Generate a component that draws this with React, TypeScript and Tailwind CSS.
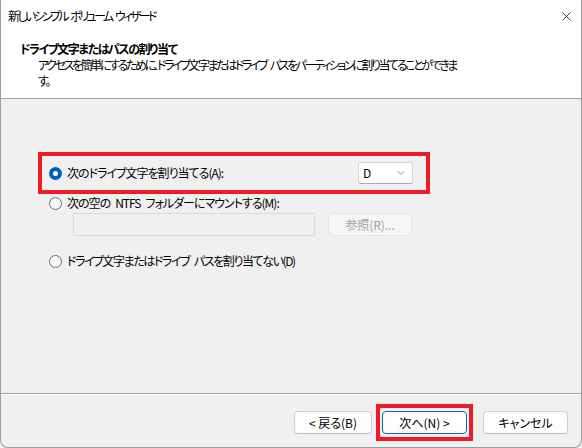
import { X, ChevronDown } from "lucide-react";

function Radio({ checked }: { checked?: boolean }) {
  if (checked) {
    return (
      <span className="flex size-[13px] shrink-0 items-center justify-center rounded-full bg-[#005fb8]">
        <span className="size-[5px] rounded-full bg-white" />
      </span>
    );
  }
  return <span className="size-[13px] shrink-0 rounded-full border border-[#6b6b6b] bg-[#f7f7f7]" />;
}

function Button({ label, primary }: { label: string; primary?: boolean }) {
  return (
    <div
      className={`flex h-[23px] items-center justify-center rounded-[4px] border bg-[#fdfdfd] ${
        primary ? "w-[85px] border-[#0067c0]" : "border-[#d0d0d0] border-b-[#bcbcbc]"
      }`}
    >
      {label}
    </div>
  );
}

// en spaces keep word gaps visible under the tight tracking
const SP = "\u2002";

export default function App() {
  return (
    <div className="h-[448px] w-[582px] bg-[#f0f0f0] font-['Noto_Sans_CJK_JP',sans-serif] text-[12px] leading-[16px] text-black [font-feature-settings:'palt']">
      <div className="flex h-full flex-col overflow-hidden rounded-b-[8px] border-x border-b border-[#9c9c9c] bg-[#f0f0f0]">
        {/* title bar */}
        <div className="flex h-[32px] shrink-0 items-center justify-between bg-white pl-[7px] pr-[7px]">
          <span className="tracking-[-2.6px]">{`新しいシンプル${SP}ボリューム${SP}ウィザード`}</span>
          <X className="size-[15px] text-[#1a1a1a]" strokeWidth={1.3} aria-hidden="true" />
        </div>

        {/* header */}
        <div className="h-[67px] shrink-0 border-b border-[#a0a0a0] bg-white pl-[19px] pt-[9px]">
          <p className="font-bold tracking-[-1.5px]">ドライブ文字またはパスの割り当て</p>
          <p className="pl-[18px] tracking-[-2.4px]">
            {`アクセスを簡単にするために、ドライブ文字またはドライブ${SP}パスをパーティションに割り当てることができま`}
            <br />す。
          </p>
        </div>

        {/* body */}
        <div className="flex-1 pl-[37px] pt-[53px]">
          <div className="flex h-[42px] w-[392px] items-center border-4 border-[#ed1c24] pl-[7px] pr-[13px]">
            <Radio checked />
            <span className="ml-[5px] tracking-[-1px]">次のドライブ文字を割り当てる(A):</span>
            <div className="ml-auto flex h-[22px] w-[55px] items-center justify-between rounded-[3px] border border-[#d5d5d5] border-b-[#a8a8a8] bg-white pl-[4px] pr-[5px]">
              <span>D</span>
              <ChevronDown className="size-[12px] text-[#5c5c5c]" strokeWidth={1.3} aria-hidden="true" />
            </div>
          </div>

          <div className="mt-[1px] flex h-[16px] items-center pl-[11px]">
            <Radio />
            <span className="ml-[5px] tracking-[-1px]">{`次の空の${SP}NTFS${SP}フォルダーにマウントする(M):`}</span>
          </div>
          <div className="mt-[2px] flex pl-[35px]">
            <div className="h-[23px] w-[242px] border border-[#dadada] bg-[#f0f0f0]" />
            <div className="ml-[13px] flex h-[23px] w-[84px] items-center justify-center rounded-[4px] border border-[#e3e3e3] bg-[#f6f6f6] text-[#a2a2a2]">
              参照(R)...
            </div>
          </div>

          <div className="mt-[17px] flex h-[16px] items-center pl-[11px]">
            <Radio />
            <span className="ml-[5px] tracking-[-1.4px]">{`ドライブ文字またはドライブ${SP}パスを割り当てない(D)`}</span>
          </div>
        </div>

        {/* footer */}
        <div className="h-[2px] shrink-0 border-t border-[#a0a0a0] bg-white" />
        <div className="flex h-[52px] shrink-0 items-start pl-[293px] pt-[9px]">
          <div className="mt-[7px] w-[78px]">
            <Button label="< 戻る(B)" />
          </div>
          <div className="ml-[4px] border-4 border-[#ed1c24] px-[2px] py-[3px]">
            <Button label="次へ(N) >" primary />
          </div>
          <div className="ml-[10px] mt-[7px] w-[85px]">
            <Button label="キャンセル" />
          </div>
        </div>
      </div>
    </div>
  );
}
